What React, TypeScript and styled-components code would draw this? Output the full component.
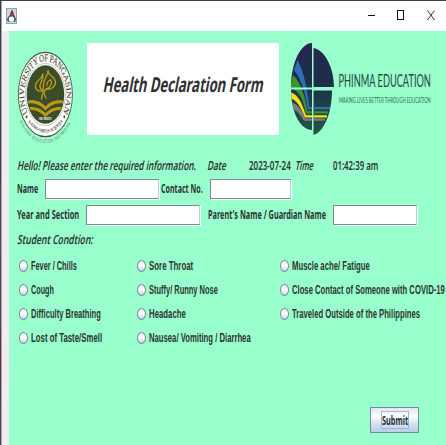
import React, { useLayoutEffect, useRef, useState } from "react";
import styled, { createGlobalStyle } from "styled-components";

const Global = createGlobalStyle`
  * { box-sizing: border-box; }
  html, body { margin: 0; overflow: hidden; }
`;

const Window = styled.div`
  width: 446px;
  height: 445px;
  display: flex;
  flex-direction: column;
  overflow: hidden;
  background: #99ffcc;
  border-top: 1px solid #3c404b;
  color: #2d3532;
`;

const WindowBody = styled.div`
  flex: 1;
  display: flex;
  min-height: 0;
`;

const Backdrop = styled.div`
  width: 1px;
  background: linear-gradient(#3b3f4a 0 30%, #5a4a5c 55%, #6d3040 80%, #4c4654);
`;

const Column = styled.div`
  flex: 1;
  display: flex;
  flex-direction: column;
  min-width: 0;
  border-left: 1px solid #a3a5aa;
`;

const TitleBar = styled.div`
  height: 30px;
  display: flex;
  align-items: center;
  justify-content: space-between;
  padding: 0 11px 1px 4px;
  background: #fff;
`;

const WindowButtons = styled.div`
  display: flex;
  align-items: center;
  gap: 22px;
`;

const Content = styled.div`
  flex: 1;
  display: flex;
  flex-direction: column;
  border-left: 7px solid #eeeeee;
  background: #99ffcc;
  overflow: hidden;
`;

const Header = styled.div`
  height: 122px;
  display: flex;
  flex: none;
`;

const TitleCard = styled.div`
  width: 192px;
  height: 92px;
  flex: none;
  margin: 12px 8px 0 0;
  padding: 0 0 10px 16px;
  display: flex;
  align-items: center;
  background: #fff;
  color: #303030;
`;

const Row = styled.div<{ $h: number }>`
  height: ${(p) => p.$h}px;
  flex: none;
  display: flex;
  align-items: center;
  padding-left: 8px;
`;

type Kind = "title" | "heading" | "value" | "label" | "option" | "button";

const fonts: Record<Kind, string> = {
  title: '700 20.5px/26px "Noto Sans", sans-serif',
  heading: '600 12.5px/18px "Noto Sans", sans-serif',
  value: '600 12px/18px "Noto Sans", sans-serif',
  label: '700 11.5px/16px "Noto Sans", sans-serif',
  option: '700 12px/16px "Liberation Sans", Arial, sans-serif',
  button: '700 12.5px/16px "Noto Sans", sans-serif',
};

const TextBox = styled.span<{ $w: number; $gap: number; $drop: boolean }>`
  display: block;
  flex: none;
  width: ${(p) => p.$w}px;
  margin-left: ${(p) => p.$gap}px;
  padding-top: ${(p) => (p.$drop ? 2 : 0)}px;
`;

const Glyphs = styled.span<{ $kind: Kind }>`
  display: inline-block;
  vertical-align: top;
  white-space: nowrap;
  transform-origin: 0 72%;
  font: ${(p) => fonts[p.$kind]};
`;

/** Condenses its text horizontally to fill the given width. */
function Text({ w, gap = 0, kind, slant, children }: {
  w: number; gap?: number; kind: Kind; slant?: boolean; children: string;
}) {
  const ref = useRef<HTMLSpanElement>(null);
  const [scale, setScale] = useState(1);
  useLayoutEffect(() => {
    if (ref.current) setScale(w / ref.current.offsetWidth);
  }, [w, children]);
  return (
    <TextBox $w={w} $gap={gap} $drop={kind === "label" || kind === "button"}>
      <Glyphs ref={ref} $kind={kind} style={{ transform: `${slant ? "skewX(-11deg) " : ""}scaleX(${scale})` }}>
        {children}
      </Glyphs>
    </TextBox>
  );
}

const Field = styled.input<{ $w: number; $gap: number }>`
  width: ${(p) => p.$w}px;
  height: 20px;
  flex: none;
  margin: 0 0 0 ${(p) => p.$gap}px;
  padding: 0 2px;
  border: 1px solid #7a8a99;
  border-right-color: #b8cfe5;
  border-radius: 0;
  box-shadow: 1px 1px 0 #effff7;
  background: #fff;
  outline: none;
`;

const Options = styled.div`
  display: grid;
  grid-template-columns: 118px 143px 168px;
  grid-auto-rows: 24px;
  padding: 7px 0 0 10px;
`;

const Option = styled.label`
  display: flex;
  align-items: center;
`;

const Dot = styled.input.attrs({ type: "radio" })`
  appearance: none;
  width: 9px;
  height: 12px;
  flex: none;
  margin: 0 0 2px;
  border: 1px solid #7a8a99;
  border-radius: 50%;
  background: linear-gradient(#e4edf8, #ffffff 45%, #c3d5ea);
`;

const Footer = styled.div`
  flex: 1;
  display: flex;
  align-items: flex-end;
  justify-content: flex-end;
  padding: 0 27px 12px 0;
`;

const Submit = styled.button`
  width: 49px;
  height: 26px;
  padding: 0;
  display: flex;
  align-items: center;
  justify-content: center;
  border: 1px solid #7a8a99;
  border-radius: 0;
  background: linear-gradient(#dde8f3, #ffffff 35%, #dbe6f2 60%, #b8cfe5);
  color: #2b3038;
`;

const FocusRing = styled.span`
  width: 28px;
  height: 18px;
  display: flex;
  align-items: center;
  border: 1px solid #a3b8cc;
`;

const SealArt = styled.svg`
  width: 70px;
  height: 115px;
  margin: 7px 0 0 8px;
  flex: none;
`;

const PhinmaArt = styled.svg`
  width: 159px;
  height: 100px;
  margin-top: 9px;
  flex: none;
`;

const JavaIcon = () => (
  <svg width="11" height="16" viewBox="0 0 11 16">
    <rect x=".5" y=".5" width="10" height="15" fill="#c7d8e8" stroke="#8da5b8" />
    <path d="M6 1.500C5 4 4 6 3.500 8.500h5C8 6 7 4 6 1.500z" fill="#252b33" />
    <path d="M3.500 7.500c-2 1.500-2.500 3-2.500 5l2 1.500h5.500l1.500-1.500c0-2-.5-3.500-2-5z" fill="#4d5862" />
    <ellipse cx="5.500" cy="11.200" rx="2.600" ry="2.600" fill="#fff" />
    <ellipse cx="6" cy="6" rx="1.700" ry="1.800" fill="#e02d28" />
  </svg>
);

const Seal = () => (
  <SealArt viewBox="17 38 70 115">
    <defs>
      <path id="sealRing" d="M-27.200 19A33.200 33.200 0 1 1 27.200 19" />
      <path id="sealLow" d="M-28 26A38.300 38.300 0 0 0 28 26" />
      <path id="sealOut" d="M-41 26A48.500 48.500 0 0 0 41 26" />
    </defs>
    <g transform="translate(45.4 94.5) scale(.64 1)">
      <circle r="42.2" fill="#fff" stroke="#44543b" strokeWidth="1.300" />
      <circle r="31" fill="none" stroke="#7c8a70" strokeWidth=".6" />
      <circle r="29.300" fill="#3a4c28" />
      <text fontFamily="Liberation Serif, serif" fontSize="10.500" fill="#3d4d35" stroke="#3d4d35" strokeWidth=".15">
        <textPath href="#sealRing" startOffset="1" textLength="142">UNIVERSITY OF PANGASINAN</textPath>
      </text>
      <circle cx="-29.500" cy="22.500" r="1.400" fill="#3a4c28" />
      <circle cx="29.500" cy="22.500" r="1.400" fill="#3a4c28" />
      <text fontFamily="Liberation Serif, serif" fontWeight="700" fontSize="5" fill="#46563f">
        <textPath href="#sealLow" startOffset="2" textLength="59">KATWA • VIRTUS • SCIENTIA</textPath>
      </text>
      <text fontFamily="Liberation Sans, sans-serif" fontSize="5" fill="#5c8470">
        <textPath href="#sealOut" startOffset="2" textLength="92">PHINMA EDUCATION NETWORK</textPath>
      </text>
      <text y="26" x="-10" fontFamily="Liberation Serif, serif" fontWeight="700" fontSize="4.600" fill="#fff" textLength="20">MCMXXV</text>
    </g>
    <g fill="none" stroke="#b99619" strokeWidth="1.400" strokeLinecap="round">
      <path d="M42 91c-5 1-7-3-6.500-6 1-5 6-5 7.500-11M43 74c1 5-3 8-3 12 0 3 1 4 3 4" />
      <path d="M48 71c0 6-5 7-4.500 14 0 5-.5 9-2 14" />
      <path d="M48 71c0 5 7 5 7.500 11 0 5-5 8-9 7 4-2 6-5 4.500-9-2 0-4 2-4 5" />
      <path d="M46.500 89c-3 1-3 5-.5 9" />
    </g>
    <g fill="#bd991a">
      <path d="M28 100.500c8-1 13 1 17.500 6 4.500-5 9.500-7 17.500-6l-.6 3c-7-1-12 2-16.900 7-4.900-5-9.900-8-16.900-7z" />
      <path d="M29.500 107c7 0 11 1.500 16 6 5-4.500 9-6 16-6l-1.200 3c-6 0-10 2.500-14.800 7-4.800-4.500-8.800-7-14.800-7z" />
    </g>
  </SealArt>
);

const Phinma = () => (
  <PhinmaArt viewBox="287 40 159 100">
    <defs>
      <linearGradient id="globe" x1="0" y1="0" x2="0" y2="1">
        <stop offset="0" stopColor="#292650" />
        <stop offset=".45" stopColor="#1c2f4b" />
        <stop offset="1" stopColor="#245843" />
      </linearGradient>
      <clipPath id="globeClip">
        <path d="M312 43C301 43 291 62 291 88s10 42 21 42zM313.500 48C325 50 334 68 334 87H313.500zM313.500 90.500H332C332 113 324 132 313.500 135z" />
      </clipPath>
    </defs>
    <g clipPath="url(#globeClip)">
      <rect x="289" y="42" width="47" height="94" fill="url(#globe)" />
      <path d="M297.500 60C304 72 307 88 309.500 107H330v2.200H308C305 91 301 79 294 70z" fill="#2e6eb5" />
      <path d="M293 75C301 82 305 97 307.500 111.300H328v2.200H306C303 98 299 91 290 87z" fill="#3c922f" />
      <path d="M289 92C299 94 302 104 306 115.300H327v2.200H305C300 106 297 100 289 98z" fill="#ffdf13" />
      <path d="M289 102C298 103 301 110 305.500 118.500H325v2.200H304C299 112 295 109 289 108z" fill="#7a8182" />
      <path d="M289 87.500h23v2h-23z" fill="#99ffcc" />
    </g>
    <g fontFamily="Lato, sans-serif" fill="#22483d">
      <text transform="translate(338.500 87.300) scale(.6 1)" fontSize="18" textLength="154" lengthAdjust="spacingAndGlyphs">PHINMA EDUCATION</text>
      <text transform="translate(339 103.200) scale(.6 1)" fontSize="8" fill="#336a56" textLength="153" lengthAdjust="spacingAndGlyphs">MAKING LIVES BETTER THROUGH EDUCATION</text>
    </g>
  </PhinmaArt>
);

const Controls = () => (
  <WindowButtons>
    <svg width="7" height="11"><path d="M0 5.500h7" stroke="#111" /></svg>
    <svg width="8" height="11"><rect x=".5" y=".5" width="6" height="9" fill="none" stroke="#111" /></svg>
    <svg width="8" height="11"><path d="M.5.500l7 9.500M7.500.500l-7 9.500" stroke="#222" strokeWidth=".9" /></svg>
  </WindowButtons>
);

const symptoms: [string, number][] = [
  ["Fever / Chills", 46], ["Sore Throat", 44], ["Muscle ache/ Fatigue", 78],
  ["Cough", 23], ["Stuffy/ Runny Nose", 69], ["Close Contact of Someone with COVID-19", 153],
  ["Difficulty Breathing", 70], ["Headache", 37], ["Traveled Outside of the Philippines", 128],
  ["Lost of Taste/Smell", 71], ["Nausea/ Vomiting / Diarrhea", 102],
];

export default function App() {
  return (
    <>
      <Global />
      <Window>
        <WindowBody>
          <Backdrop />
          <Column>
            <TitleBar>
              <JavaIcon />
              <Controls />
            </TitleBar>
            <Content>
              <Header>
                <Seal />
                <TitleCard>
                  <Text kind="title" w={160} slant>Health Declaration Form</Text>
                </TitleCard>
                <Phinma />
              </Header>
              <Row $h={26}>
                <Text kind="heading" w={179} slant>Hello! Please enter the required information.</Text>
                <Text kind="heading" w={19} gap={11} slant>Date</Text>
                <Text kind="value" w={42} gap={23}>2023-07-24</Text>
                <Text kind="heading" w={18} gap={4} slant>Time</Text>
                <Text kind="value" w={45} gap={20}>01:42:39 am</Text>
              </Row>
              <Row $h={20}>
                <Text kind="label" w={21}>Name</Text>
                <Field $w={114} $gap={7} />
                <Text kind="label" w={42} gap={2}>Contact No.</Text>
                <Field $w={81} $gap={7} />
              </Row>
              <Row $h={32}>
                <Text kind="label" w={62}>Year and Section</Text>
                <Field $w={114} $gap={7} />
                <Text kind="label" w={118} gap={8}>Parent's Name / Guardian Name</Text>
                <Field $w={84} $gap={7} />
              </Row>
              <Row $h={17}>
                <Text kind="heading" w={76} slant>Student Condtion:</Text>
              </Row>
              <Options>
                {symptoms.map(([name, w]) => (
                  <Option key={name}>
                    <Dot />
                    <Text kind="option" w={w} gap={3}>{name}</Text>
                  </Option>
                ))}
              </Options>
              <Footer>
                <Submit>
                  <FocusRing>
                    <Text kind="button" w={26}>Submit</Text>
                  </FocusRing>
                </Submit>
              </Footer>
            </Content>
          </Column>
        </WindowBody>
      </Window>
    </>
  );
}
